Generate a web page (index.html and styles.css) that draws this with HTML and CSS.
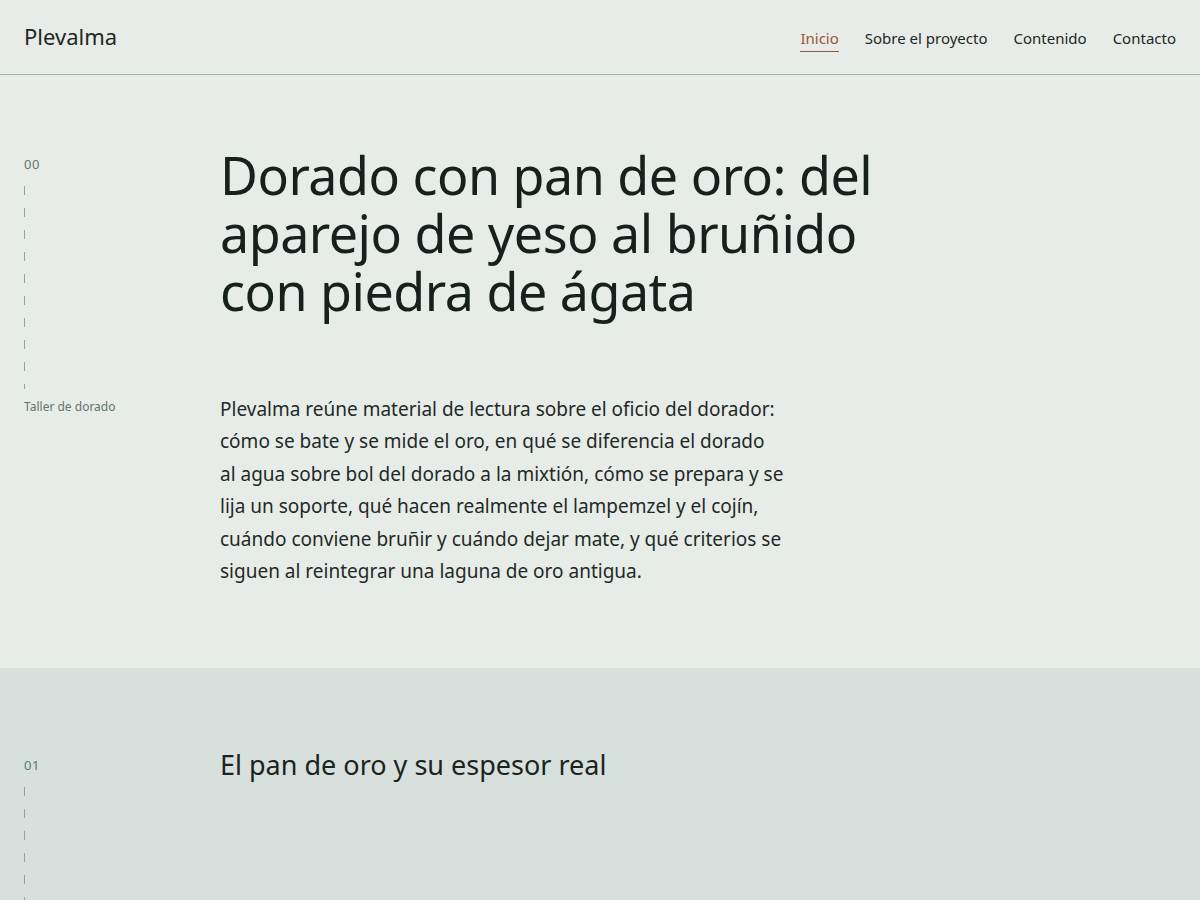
FILE: index.html
```html
<!DOCTYPE html>
<html lang="es">
<head>
<meta charset="utf-8">
<title>Plevalma</title>
<link rel="stylesheet" href="styles.css">
</head>
<body>
<header class="site-header">
  <a class="logo" href="#">Plevalma</a>
  <nav class="nav">
    <a class="nav-link active" href="#">Inicio</a>
    <a class="nav-link" href="#">Sobre el proyecto</a>
    <a class="nav-link" href="#">Contenido</a>
    <a class="nav-link" href="#">Contacto</a>
  </nav>
</header>
<main>
  <section class="section hero">
    <aside class="rail">
      <span class="rail-num">00</span>
      <span class="rail-line hero-line"></span>
      <span class="rail-label">Taller de dorado</span>
    </aside>
    <div class="content">
      <h1 class="hero-title">Dorado con pan de oro: del aparejo de yeso al bruñido con piedra de ágata</h1>
      <p class="lead">Plevalma reúne material de lectura sobre el oficio del dorador: cómo se bate y se mide el oro, en qué se diferencia el dorado al agua sobre bol del dorado a la mixtión, cómo se prepara y se lija un soporte, qué hacen realmente el lampemzel y el cojín, cuándo conviene bruñir y cuándo dejar mate, y qué criterios se siguen al reintegrar una laguna de oro antigua.</p>
    </div>
  </section>
  <section class="section alt">
    <aside class="rail">
      <span class="rail-num">01</span>
      <span class="rail-line long-line"></span>
    </aside>
    <div class="content">
      <h2 class="section-title">El pan de oro y su espesor real</h2>
    </div>
  </section>
</main>
</body>
</html>
```

FILE: styles.css
```css
* { box-sizing: border-box; }
html, body { margin: 0; padding: 0; }
body {
  background: #e8ece9;
  color: #1a211e;
  font-family: "Noto Sans", "Open Sans", sans-serif;
}
a { text-decoration: none; color: inherit; }

.site-header {
  height: 75px;
  display: flex;
  align-items: center;
  justify-content: space-between;
  padding: 0 24px;
  border-bottom: 1px solid #a8b3ae;
}
.logo {
  font-size: 22px;
  color: #1f2724;
  margin-top: -3px;
}
.nav {
  display: flex;
  gap: 26px;
  margin-top: 6px;
}
.nav-link {
  font-size: 15px;
  color: #1f2724;
  padding-bottom: 3px;
  border-bottom: 1px solid transparent;
}
.nav-link.active {
  color: #9a5535;
  border-bottom-color: #9a5535;
}

.section {
  display: grid;
  grid-template-columns: 172px minmax(0, 1fr);
  column-gap: 24px;
  padding: 0 24px;
}
.hero {
  padding-top: 71px;
  padding-bottom: 81px;
}
.alt {
  background: #d7e0dc;
  padding-top: 79px;
  min-height: 240px;
}

.rail {
  display: flex;
  flex-direction: column;
  align-items: flex-start;
  padding-top: 9px;
}
.rail-num {
  font-size: 13px;
  line-height: 18px;
  color: #587a6d;
  letter-spacing: 0.5px;
}
.rail-line {
  display: block;
  width: 1px;
  margin-top: 13px;
  background: repeating-linear-gradient(to bottom, #93a49d 0, #93a49d 9px, transparent 9px, transparent 22px);
}
.hero-line { height: 203px; }
.long-line { height: 140px; }
.rail-label {
  margin-top: 9px;
  font-size: 12px;
  line-height: 18px;
  color: #65736d;
}

.content { min-width: 0; }
.hero-title {
  margin: 0;
  font-size: 52px;
  line-height: 58px;
  font-weight: 400;
  color: #17201c;
  max-width: 680px;
  letter-spacing: -0.5px;
}
.lead {
  margin: 73px 0 0;
  font-size: 19px;
  line-height: 32.4px;
  color: #222a26;
  max-width: 565px;
}
.section-title {
  margin: 0;
  font-size: 27px;
  line-height: 36px;
  font-weight: 400;
  color: #1c2420;
}
```
